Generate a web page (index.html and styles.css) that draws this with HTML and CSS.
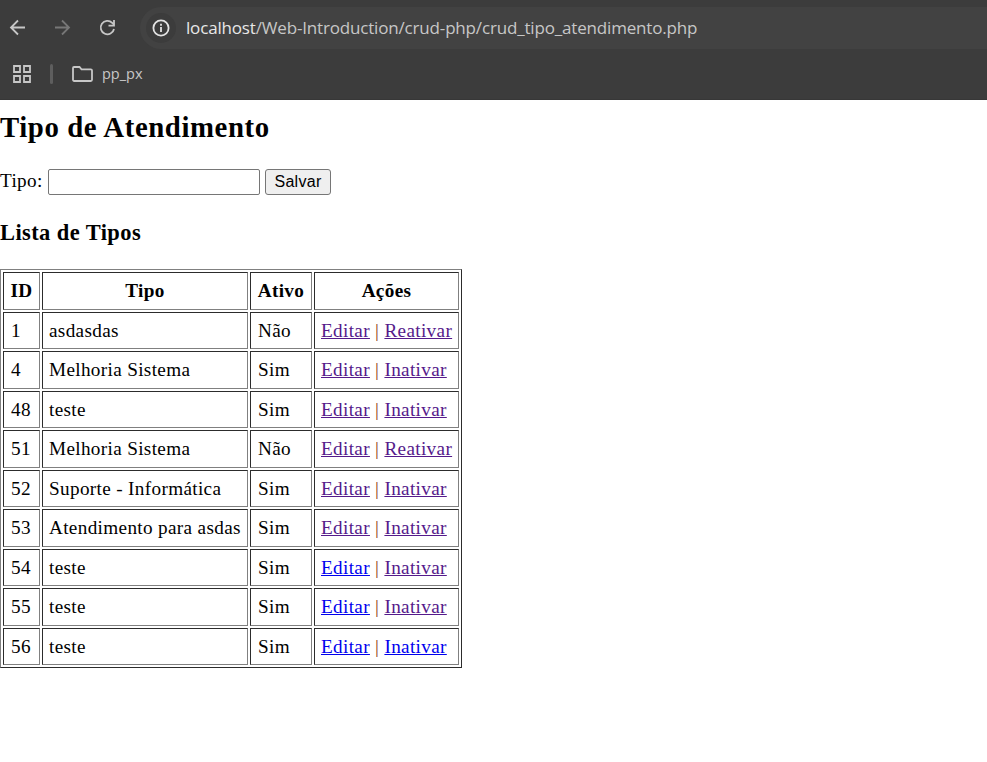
FILE: index.html
```html
<!DOCTYPE html>
<html lang="pt-BR">
<head>
<meta charset="utf-8">
<title>Tipo de Atendimento</title>
<link rel="stylesheet" href="styles.css">
</head>
<body>
<header class="browser">
  <div class="toolbar">
    <svg class="icon back" width="18" height="18" viewBox="0 0 18 18"><path d="M16 8.500H2M9 1.500L2 8.500l7 7"/></svg>
    <svg class="icon forward" width="18" height="18" viewBox="0 0 18 18"><path d="M1 8.500H15M8 1.500l7 7-7 7"/></svg>
    <svg class="icon reload" width="18" height="18" viewBox="0 0 18 18"><path d="M15 10A6.700 6.700 0 1 1 13.200 3.900L15 5.700"/><path d="M15 1V6.700H9.500"/></svg>
    <div class="address">
      <span class="info"><svg class="icon" width="18" height="18" viewBox="0 0 18 18"><circle cx="9" cy="9" r="7.600"/><path d="M9 8v5M9 4.800v1.900"/></svg></span>
      <span class="url"><span class="host">localhost</span>/Web-Introduction/crud-php/crud_tipo_atendimento.php</span>
    </div>
  </div>
  <div class="bookmarks">
    <svg class="icon apps" width="18" height="18" viewBox="0 0 18 18"><path d="M1 1h6v6H1zM11 1h6v6h-6zM1 11h6v6H1zM11 11h6v6h-6z"/></svg>
    <span class="divider"></span>
    <svg class="icon folder" width="21" height="16" viewBox="0 0 21 16"><path d="M2 1H7.500l2 2.300h9.300q1.200 0 1.200 1.200v9.300q0 1.200-1.200 1.200h-16.600Q1 15 1 13.800V2Q1 1 2 1z"/></svg>
    <span class="bookmark">pp_px</span>
  </div>
</header>
<main>
  <h2>Tipo de Atendimento</h2>
  <form>
    <label for="tipo">Tipo:</label>
    <input id="tipo" type="text">
    <button type="button">Salvar</button>
  </form>
  <h3>Lista de Tipos</h3>
  <table>
    <colgroup><col class="c-id"><col class="c-tipo"><col class="c-ativo"><col class="c-acoes"></colgroup>
    <tr><th>ID</th><th>Tipo</th><th>Ativo</th><th>Ações</th></tr>
    <tr><td>1</td><td>asdasdas</td><td>Não</td><td><a class="visited" href="#">Editar</a> <i>|</i> <a class="visited" href="#">Reativar</a></td></tr>
    <tr><td>4</td><td>Melhoria Sistema</td><td>Sim</td><td><a class="visited" href="#">Editar</a> <i>|</i> <a class="visited" href="#">Inativar</a></td></tr>
    <tr><td>48</td><td>teste</td><td>Sim</td><td><a class="visited" href="#">Editar</a> <i>|</i> <a class="visited" href="#">Inativar</a></td></tr>
    <tr><td>51</td><td>Melhoria Sistema</td><td>Não</td><td><a class="visited" href="#">Editar</a> <i>|</i> <a class="visited" href="#">Reativar</a></td></tr>
    <tr><td>52</td><td>Suporte - Informática</td><td>Sim</td><td><a class="visited" href="#">Editar</a> <i>|</i> <a class="visited" href="#">Inativar</a></td></tr>
    <tr><td>53</td><td>Atendimento para asdas</td><td>Sim</td><td><a class="visited" href="#">Editar</a> <i>|</i> <a class="visited" href="#">Inativar</a></td></tr>
    <tr><td>54</td><td>teste</td><td>Sim</td><td><a class="new" href="#">Editar</a> <i>|</i> <a class="visited" href="#">Inativar</a></td></tr>
    <tr><td>55</td><td>teste</td><td>Sim</td><td><a class="new" href="#">Editar</a> <i>|</i> <a class="visited" href="#">Inativar</a></td></tr>
    <tr><td>56</td><td>teste</td><td>Sim</td><td><a class="new" href="#">Editar</a> <i>|</i> <a class="new" href="#">Inativar</a></td></tr>
  </table>
</main>
</body>
</html>
```
FILE: styles.css
```css
* { box-sizing: border-box; }
body {
  margin: 0;
  background: #fff;
  color: #000;
  font: 19.2px/22px "Liberation Serif", serif;
  overflow: hidden;
}
.browser {
  height: 100px;
  padding-top: 7px;
  background: #3c3c3c;
  border-bottom: 1px solid #373737;
  font-family: "Open Sans", "Noto Sans", sans-serif;
  color: #c7c7c7;
}
.icon {
  display: block;
  flex: none;
  fill: none;
  stroke: #c7c7c7;
  stroke-width: 1.8;
}
.toolbar {
  display: flex;
  align-items: center;
  height: 42px;
  padding-left: 9px;
}
.forward { margin-left: 27px; stroke: #777; }
.reload { margin-left: 27px; }
.address {
  display: flex;
  align-items: center;
  flex: 1;
  height: 42px;
  margin-left: 23px;
  padding-left: 6px;
  border-radius: 21px 0 0 21px;
  background: #424242;
}
.info {
  display: grid;
  place-items: center;
  width: 30px;
  height: 30px;
  border-radius: 50%;
  background: #3c3c3c;
}
.info .icon { stroke: #e3e3e3; }
.url {
  margin-left: 10px;
  font-size: 17px;
  letter-spacing: -0.17px;
  white-space: nowrap;
}
.host { color: #e8e8e8; }
.bookmarks {
  display: flex;
  align-items: center;
  height: 50px;
  padding-left: 13px;
}
.divider {
  width: 3px;
  height: 20px;
  margin-left: 19px;
  border-radius: 2px;
  background: #5e5e5e;
}
.folder { margin-left: 19px; }
.bookmark { margin-left: 9px; font-size: 14.5px; }
main { letter-spacing: 0.34px; }
h2, h3 { margin: 0; }
h2 {
  padding-top: 11px;
  font-size: 28.8px;
  line-height: 33px;
  letter-spacing: 0.58px;
}
form {
  display: flex;
  align-items: center;
  height: 26px;
  margin-top: 25px;
}
label { width: 42px; padding-bottom: 2px; }
input {
  width: 212px;
  height: 26px;
  margin: 0 5px 0 6px;
  border: 1px solid #767676;
  border-radius: 2px;
}
button {
  width: 66px;
  height: 26px;
  padding: 0;
  border: 1px solid #767676;
  border-radius: 3px;
  background: #efefef;
  color: #000;
  font: 16px "Liberation Sans", sans-serif;
  letter-spacing: 0.3px;
}
h3 {
  margin-top: 25px;
  font-size: 22.46px;
  line-height: 26px;
  letter-spacing: 0.42px;
}
table {
  width: 462px;
  margin-top: 23px;
  table-layout: fixed;
  border: 1px solid;
  border-color: #808080 #2c2c2c #2c2c2c #808080;
  border-collapse: separate;
  border-spacing: 2px;
}
.c-id { width: 37px; }
.c-tipo { width: 206px; }
.c-ativo { width: 62px; }
.c-acoes { width: 145px; }
tr { height: 37px; }
tr:nth-child(odd) { height: 38px; }
th, td {
  padding: 0 6px;
  border: 1px solid;
  border-color: #2c2c2c #808080 #808080 #2c2c2c;
  white-space: nowrap;
}
th { padding: 0 5px; }
td:nth-child(odd):not(:nth-child(2)) { padding-left: 7px; }
i { font-style: normal; color: #8f400f; }
.visited { color: #551a8b; }
.new { color: #0000ee; }
```
